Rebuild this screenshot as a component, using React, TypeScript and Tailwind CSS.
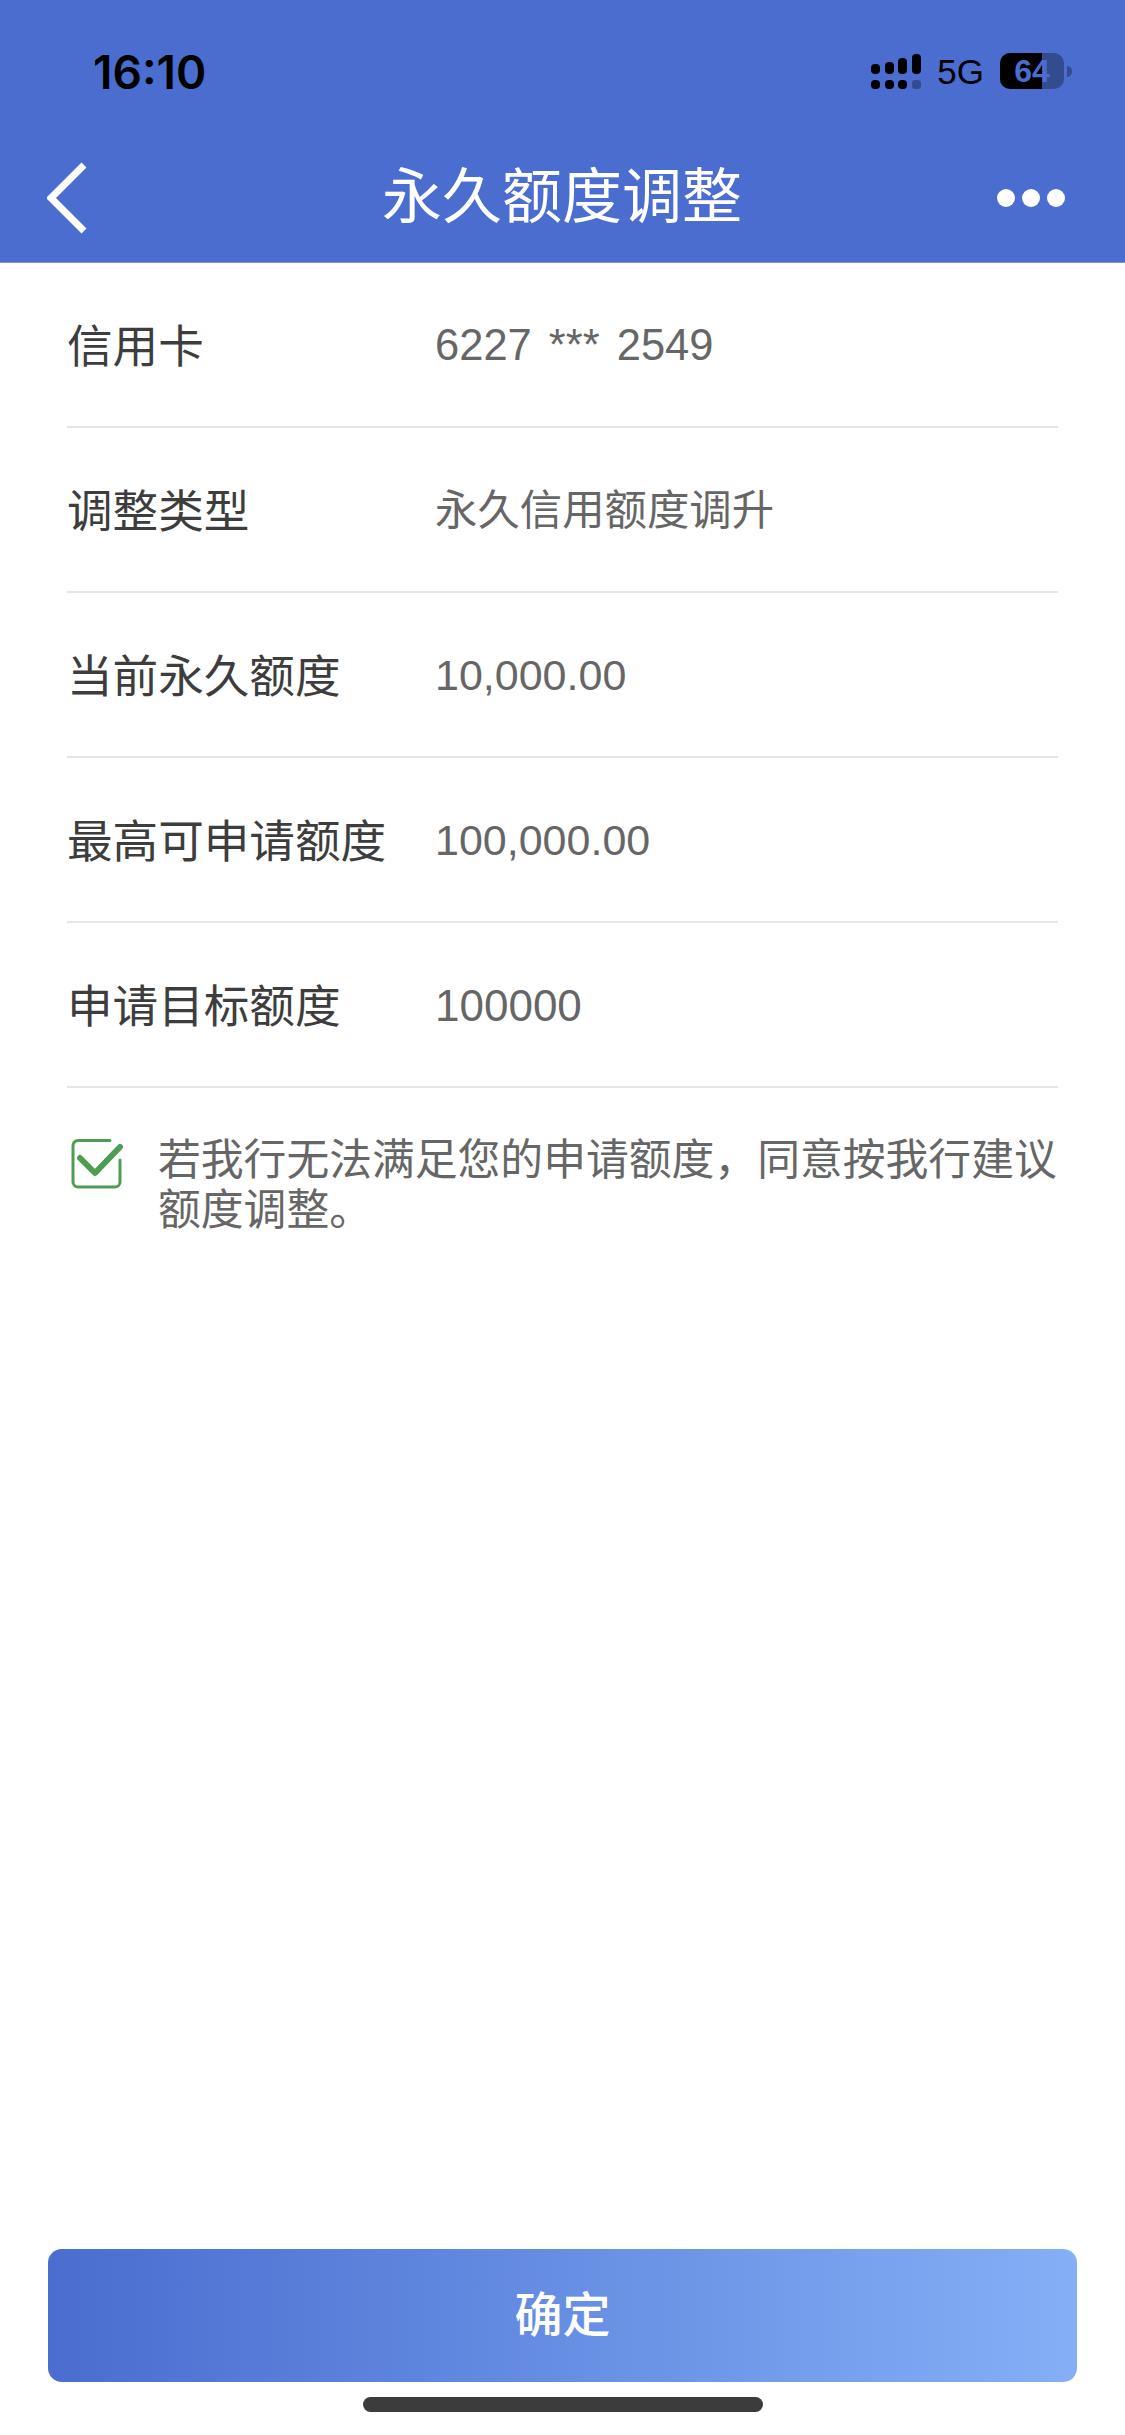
const font = "font-['Liberation_Sans','Noto_Sans_CJK_SC',sans-serif]";

const rows = [
  { label: "信用卡", value: "6227 *** 2549", cls: "text-[43.5px] [word-spacing:5px]" },
  { label: "调整类型", value: "永久信用额度调升", cls: "text-[42.4px]" },
  { label: "当前永久额度", value: "10,000.00", cls: "text-[43px]" },
  { label: "最高可申请额度", value: "100,000.00", cls: "text-[43px]" },
  { label: "申请目标额度", value: "100000", cls: "text-[44px]" },
];

function StatusIcons() {
  return (
    <div className="flex items-center">
      <svg width="50" height="36" viewBox="0 0 50 36" className="mr-[16px]">
        <rect x="0" y="11" width="9" height="10" rx="4" fill="#000" />
        <rect x="14" y="9" width="9" height="12" rx="4" fill="#000" />
        <rect x="27" y="5" width="9" height="16" rx="4" fill="#000" />
        <rect x="41" y="1" width="9" height="20" rx="4" fill="#000" />
        <rect x="0" y="27" width="9" height="9" rx="4" fill="#000" />
        <rect x="14" y="27" width="9" height="9" rx="4" fill="#000" />
        <rect x="27" y="27" width="9" height="9" rx="4" fill="#000" />
        <rect x="41" y="27" width="9" height="9" rx="3" fill="#000" fillOpacity="0.3" />
      </svg>
      <span className="mr-[16px] text-[35px] leading-none text-black">5G</span>
      <div className="relative h-[36px] w-[64px] overflow-hidden rounded-[10px] bg-black/30">
        <div className="h-full w-[42px] bg-black" />
        <span className="absolute inset-0 flex items-center justify-center text-[32px] leading-none font-bold text-[#4a6dcf]">
          64
        </span>
      </div>
      <div className="ml-[3px] h-[11px] w-[5px] rounded-r-full bg-black/30" />
    </div>
  );
}

export default function App() {
  return (
    <div className={`flex h-[2435px] w-[1125px] flex-col bg-white ${font}`}>
      <div className="h-[263px] shrink-0 border-b border-[#7b97e6] bg-[#4a6dcf]">
        <div className="flex h-[162px] items-start justify-between pt-[53px] pr-[53px] pl-[93px]">
          <span className="pt-[1px] font-['Inter',sans-serif] text-[46px] leading-[36px] font-semibold text-black">16:10</span>
          <StatusIcons />
        </div>
        <div className="flex items-center pr-[60px] pl-[47px]">
          <div className="flex-1">
            <svg width="40" height="72" viewBox="0 0 40 72">
              <path d="M37 3 L4 36 L37 69" fill="none" stroke="#fff" strokeWidth="7" />
            </svg>
          </div>
          <span className="ml-[12px] text-[60px] leading-[72px] text-white">永久额度调整</span>
          <div className="flex flex-1 justify-end gap-[7px]">
            <div className="size-[18px] rounded-full bg-white" />
            <div className="size-[18px] rounded-full bg-white" />
            <div className="size-[18px] rounded-full bg-white" />
          </div>
        </div>
      </div>

      <div className="px-[67px]">
        {rows.map((row) => (
          <div key={row.label} className="flex h-[165px] items-center border-b-2 border-[#e6e6e6] pt-[2px]">
            <span className="mt-[6px] w-[368px] shrink-0 text-[45.6px] text-[#3d3d3d]">{row.label}</span>
            <span className={`${row.cls} text-[#666]`}>{row.value}</span>
          </div>
        ))}
      </div>

      <div className="flex items-start gap-[35px] pt-[47px] pr-[67px] pl-[71px]">
        <svg width="52" height="52" viewBox="0 0 52 52" className="mt-[2px] shrink-0">
          <path
            d="M39 3.5 H7 a5 5 0 0 0 -5 5 V45 a5 5 0 0 0 5 5 H44 a5 5 0 0 0 5 -5 V23"
            fill="none"
            stroke="#4f9d55"
            strokeWidth="3"
            strokeLinecap="round"
          />
          <path
            d="M9 21 L24 36 L49 10"
            fill="none"
            stroke="#4f9d55"
            strokeWidth="6"
            strokeLinecap="round"
            strokeLinejoin="round"
          />
        </svg>
        <p className="text-[42.8px] leading-[50px] text-[#666]">若我行无法满足您的申请额度，同意按我行建议额度调整。</p>
      </div>

      <div className="mt-auto flex flex-col items-center pb-[23px]">
        <button className="h-[133px] w-[1029px] rounded-[14px] bg-gradient-to-r from-[#4a6dcf] to-[#85aff6] text-[48px] font-medium text-white">
          确定
        </button>
        <div className="mt-[15px] h-[15px] w-[400px] rounded-full bg-[#3c3c3c]" />
      </div>
    </div>
  );
}
